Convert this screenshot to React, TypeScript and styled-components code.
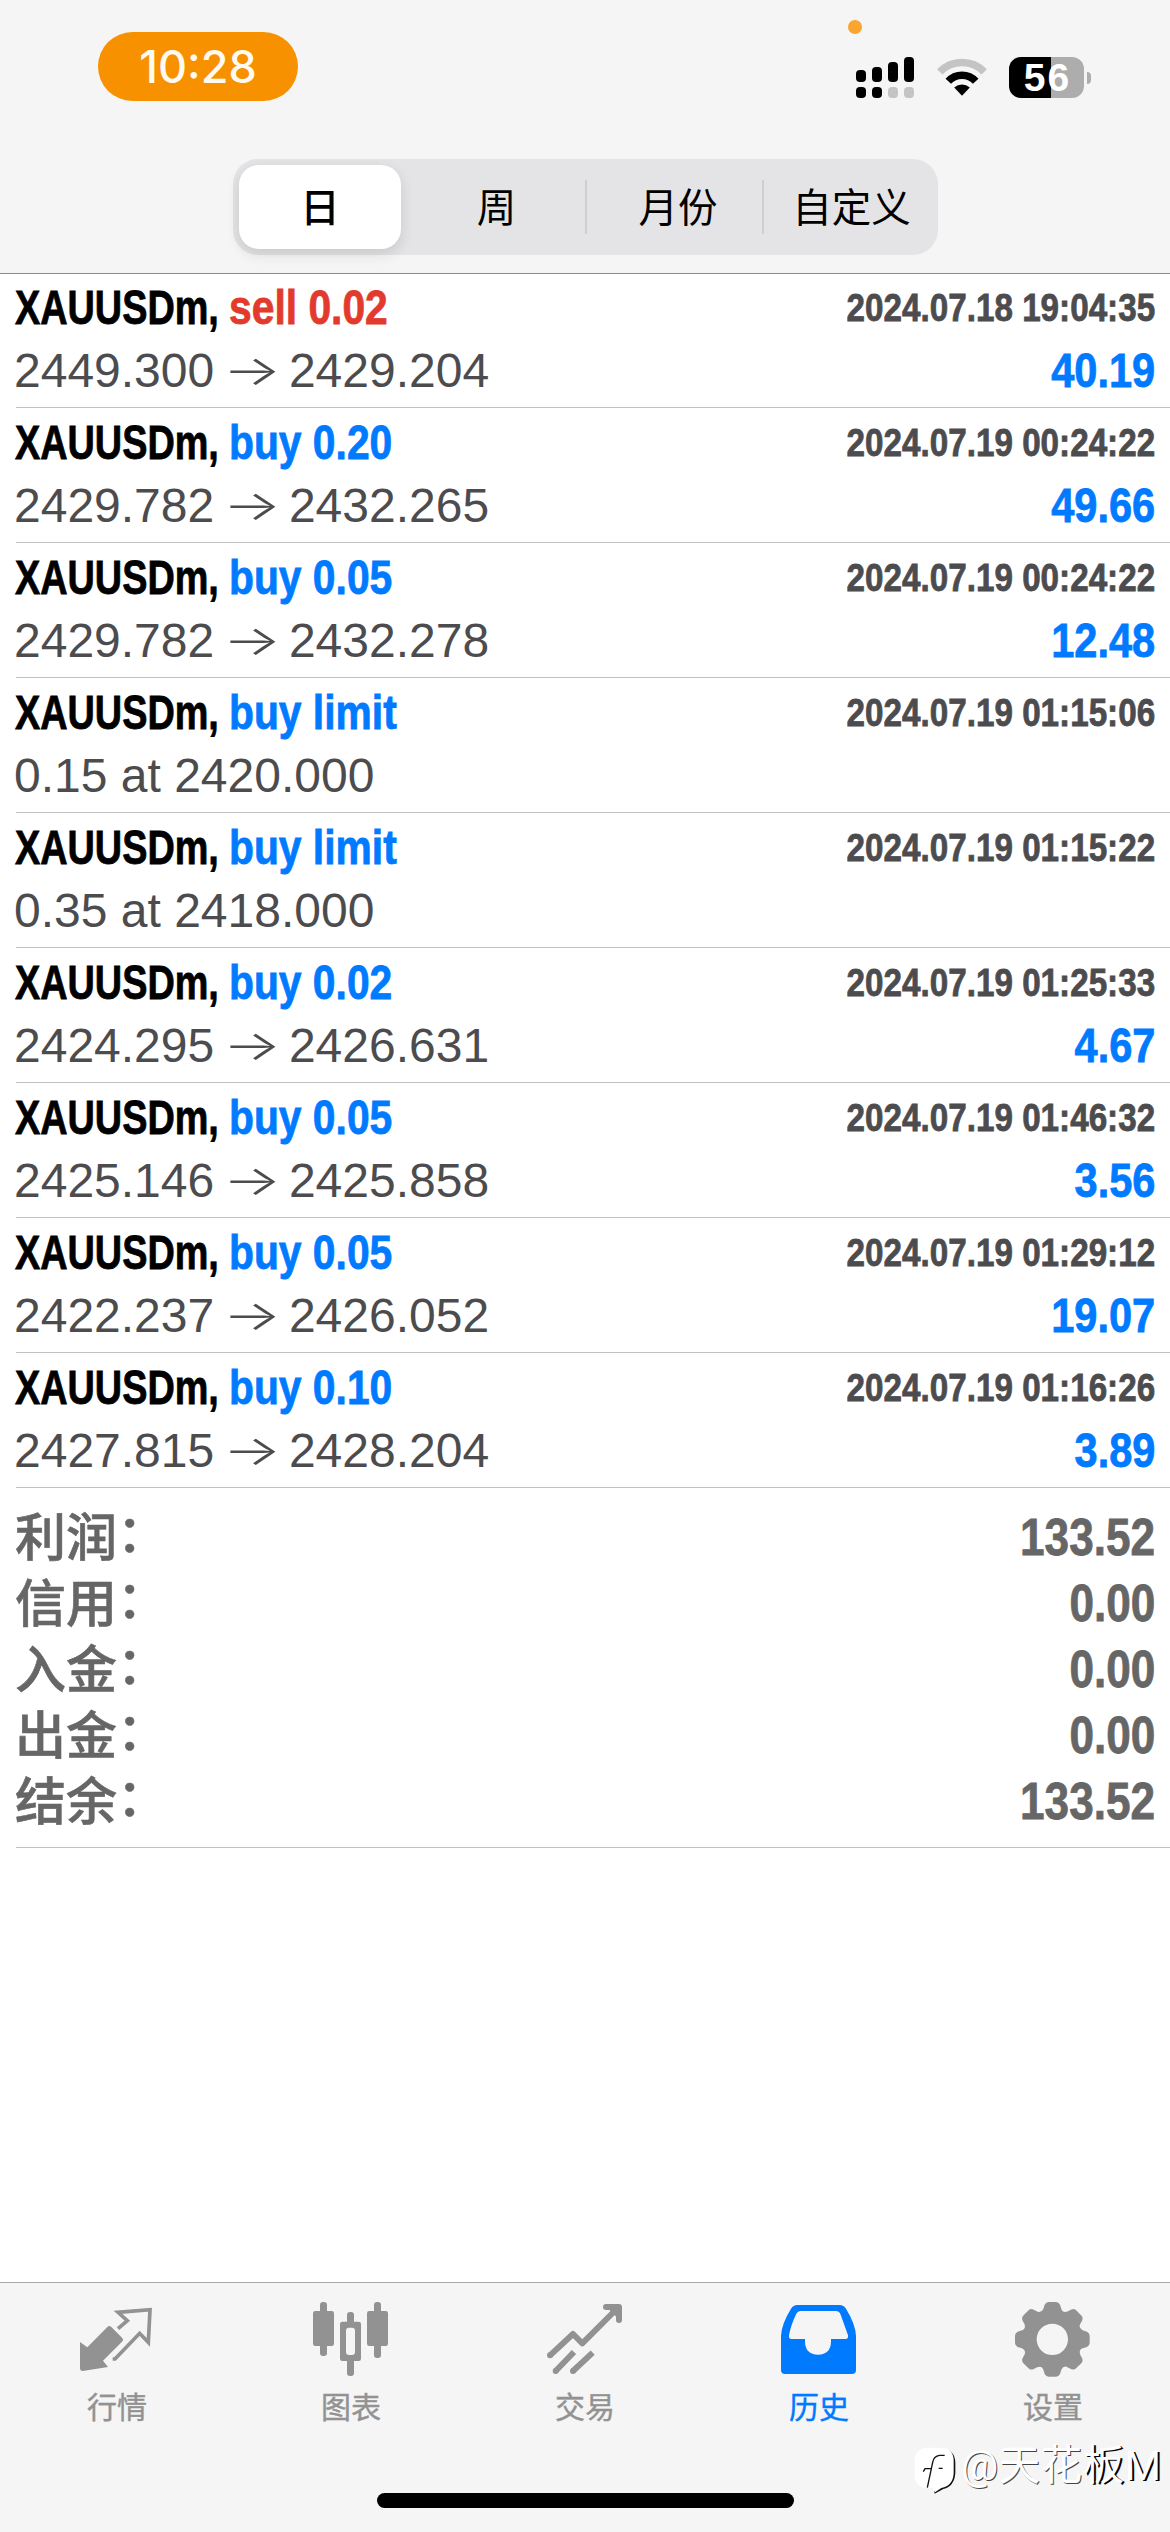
import React from 'react';
import styled, { createGlobalStyle } from 'styled-components';

const sans = `"Liberation Sans", "Noto Sans CJK SC", sans-serif`;

const colors = {
  bar: '#f5f5f5',
  blue: '#007aff',
  red: '#e23b2e',
  gray: '#929292',
  detail: '#4c4c4f',
  total: '#666666',
};

const GlobalStyle = createGlobalStyle`
  * { box-sizing: border-box; }
  body { margin: 0; background: #fff; }
`;

const Screen = styled.div`
  width: 1170px;
  height: 2532px;
  display: flex;
  flex-direction: column;
  background: #fff;
  overflow: hidden;
  white-space: nowrap;
`;

const Header = styled.header`
  flex: none;
  height: 274px;
  background: ${colors.bar};
  border-bottom: 1px solid #8c8c8c;
`;

const StatusBar = styled.div`
  position: relative;
  height: 159px;
  padding: 32px 79px 0 98px;
  display: flex;
  justify-content: space-between;
  align-items: flex-start;
`;

const TimePill = styled.div`
  width: 200px;
  height: 69px;
  border-radius: 35px;
  background: #f79100;
  color: #fffaf0;
  font: 500 45px/70px Inter, sans-serif;
  text-align: center;
`;

const MicDot = styled.i`
  position: absolute;
  left: 848px;
  top: 20px;
  width: 14px;
  height: 14px;
  border-radius: 50%;
  background: #f9a52f;
`;

const StatusIcons = styled.div`
  display: flex;
  align-items: flex-start;
  padding-top: 25px;
  svg { display: block; }
`;

const Wifi = styled.svg`
  margin: 1px 22px 0 23px;
`;

const Battery = styled.div`
  width: 75px;
  height: 41px;
  border-radius: 12px;
  background: linear-gradient(90deg, #000 42px, #adadad 42px);
  color: #fff;
  font: 700 39px/42px ${sans};
  letter-spacing: 2px;
  text-indent: 2px;
  text-align: center;
`;

const BatteryCap = styled.i`
  width: 4px;
  height: 12px;
  margin: 15px 0 0 3px;
  border-radius: 0 4px 4px 0;
  background: #adadad;
`;

const Segments = styled.nav`
  width: 705px;
  height: 96px;
  margin-left: 233px;
  padding: 6px;
  border-radius: 25px;
  background: #e4e4e6;
  display: grid;
  grid-template-columns: 162px 186px 177px 168px;
  align-items: center;
`;

const Segment = styled.button<{ $active?: boolean; $divided?: boolean }>`
  height: ${p => (p.$active ? 84 : 54)}px;
  padding: 1px 0 0 ${p => (p.$active ? 0 : 7)}px;
  border: 0 solid #cfcfd2;
  border-right-width: ${p => (p.$divided ? 2 : 0)}px;
  border-radius: ${p => (p.$active ? 20 : 0)}px;
  background: ${p => (p.$active ? '#fff' : 'transparent')};
  box-shadow: ${p => (p.$active ? '0 5px 14px rgba(0,0,0,.12)' : 'none')};
  color: #000;
  font: ${p => (p.$active ? 500 : 400)} 39.5px/54px ${sans};
`;

const List = styled.main`
  flex: 1;
  margin-top: -1px;
  padding-left: 16px;
`;

const Deal = styled.article`
  height: 135px;
  padding: 7px 15px 0 0;
  border-bottom: 1px solid #c2c2c4;
`;

const Line = styled.div`
  display: flex;
  justify-content: space-between;
  height: 63px;
`;

/* Bold text squeezed horizontally to the proportions of a condensed face. */
const Condensed = styled.span<{ $k: number; $end?: boolean }>`
  display: block;
  transform: scaleX(${p => p.$k});
  transform-origin: ${p => (p.$end ? '100%' : '0')} 50%;
  -webkit-text-stroke: 0.8px currentColor;
  font: 700 48px/56px ${sans};
`;

const Title = styled.h2`
  margin: 0 0 0 -1px;
  display: flex;
`;

const Symbol = styled(Condensed)`
  width: 214px;
  color: #000;
`;

const Action = styled(Condensed)<{ $sell?: boolean }>`
  color: ${p => (p.$sell ? colors.red : colors.blue)};
`;

const Time = styled(Condensed)`
  color: ${colors.detail};
  font-size: 39px;
  line-height: 55px;
`;

const Price = styled.span`
  margin-left: -2px;
  color: ${colors.detail};
  font: 400 48px/56px ${sans};
`;

const Arrow = styled.span`
  display: inline-block;
  width: 48px;
  height: 56px;
  vertical-align: top;
  text-align: center;
  transform: scaleX(1.5);
  font: 300 41px/54px Inter, sans-serif;
`;

const Profit = styled(Condensed)`
  color: ${colors.blue};
`;

const Totals = styled.section`
  height: 360px;
  padding: 16px 15px 0 0;
  border-bottom: 1px solid #c2c2c4;
`;

const TotalRow = styled.div`
  height: 66px;
  display: flex;
  justify-content: space-between;
  color: ${colors.total};
`;

const TotalLabel = styled.span`
  margin-left: -1px;
  padding-top: 5px;
  display: flex;
  -webkit-text-stroke: 0.6px currentColor;
  font: 500 51px/60px ${sans};
`;

const Colon = styled.span`
  margin-top: -4px;
`;

const TotalValue = styled(Condensed)`
  font-size: 51px;
  line-height: 67px;
`;

const Footer = styled.footer`
  position: relative;
  flex: none;
  height: 250px;
  border-top: 1px solid #a8a8a8;
  background: ${colors.bar};
`;

const Tabs = styled.nav`
  display: grid;
  grid-template-columns: repeat(5, 1fr);
  padding-top: 17px;
`;

const Tab = styled.a<{ $active?: boolean }>`
  display: flex;
  flex-direction: column;
  align-items: center;
  color: ${p => (p.$active ? colors.blue : colors.gray)};
  -webkit-text-stroke: 0.4px currentColor;
  font: 400 30px/40px ${sans};
  svg { display: block; margin-bottom: 10px; }
`;

const HomeIndicator = styled.i`
  position: absolute;
  left: 377px;
  top: 210px;
  width: 417px;
  height: 15px;
  border-radius: 8px;
  background: #000;
`;

const Watermark = styled.div`
  position: absolute;
  left: 914px;
  top: 154px;
  display: flex;
  color: #fff;
  font: 400 41.5px/58px Roboto, "Noto Sans CJK SC", sans-serif;
  letter-spacing: 0.5px;
  text-shadow: 1px 1px 0 #444;
  svg { display: block; margin: 10px 4px 0 0; }
`;

const WatermarkTail = styled.span`
  text-shadow: 2px 1px 0 #000;
`;

const SignalIcon = () => (
  <svg width="58" height="41" viewBox="0 0 58 41">
    {[13, 10, 5, 0].map((top, i) => (
      <g key={top}>
        <rect x={i * 16} y={top} width="10" height={25 - top} rx="4" />
        <rect x={i * 16} y="30" width="10" height="11" rx="4" fill={i < 2 ? '#000' : '#c4c4c4'} />
      </g>
    ))}
  </svg>
);

const WifiIcon = () => (
  <Wifi width="50" height="38" viewBox="0 0 50 38">
    <g fill="none" strokeWidth="7.5">
      <path d="M2.8 13.8 A31 31 0 0 1 47.2 13.8" stroke="#c4c4c4" />
      <path d="M11.3 23.2 A18.5 18.5 0 0 1 38.7 23.2" stroke="#000" />
    </g>
    <path d="M17.2 29.6 A11.5 11.5 0 0 1 32.8 29.6 L25 37.8Z" />
  </Wifi>
);

const QuotesIcon = () => (
  <svg width="78" height="78" viewBox="234 120 234 234">
    <path d="M240 246 L262 262 L322 201 Q328 195 334 201 L366 233 Q372 239 366 245 L309 302 L324 321 L248 333 Q240 333 240 324Z" fill="currentColor" />
    <path d="M354 206 L382 182 L354 157 L450 149 L445 247 L419 220 L345 297 L338 297" fill="none" stroke="currentColor" strokeWidth="11" />
  </svg>
);

const ChartIcon = () => (
  <svg width="78" height="78" viewBox="936 120 234 234" fill="currentColor">
    <rect x="960" y="126" width="21" height="162" rx="9" />
    <rect x="939" y="153" width="63" height="105" rx="7" />
    <rect x="1122" y="126" width="21" height="168" rx="9" />
    <rect x="1101" y="153" width="63" height="105" rx="7" />
    <rect x="1041" y="156" width="21" height="40" rx="9" />
    <rect x="1041" y="292" width="21" height="56" rx="9" />
    <path fillRule="evenodd" d="M1027 185h49q7 0 7 7v104q0 7-7 7h-49q-7 0-7-7v-104q0-7 7-7ZM1047 203q-9 0-9 9v64q0 9 9 9h9q9 0 9-9v-64q0-9-9-9Z" />
  </svg>
);

const TradeIcon = () => (
  <svg width="78" height="78" viewBox="438 120 234 234" fill="none" stroke="currentColor" strokeWidth="18">
    <path d="M450 286 L519 222 L547 250 L650 147" strokeLinejoin="round" />
    <path d="M618 141 H657 V180" strokeLinecap="round" strokeLinejoin="round" />
    <path d="M626 148 L650 172 L657 150 L650 141Z" fill="currentColor" stroke="none" />
    <circle cx="450" cy="286" r="9" fill="currentColor" stroke="none" />
    <circle cx="467" cy="333" r="9" fill="currentColor" stroke="none" />
    <circle cx="519" cy="333" r="9" fill="currentColor" stroke="none" />
    <path d="M467 333 L522 276 M519 333 L578 278" />
  </svg>
);

const HistoryIcon = () => (
  <svg width="78" height="78" viewBox="30 120 234 234" fill="currentColor">
    <path
      fillRule="evenodd"
      d="M82 135H209Q221 135 228 146Q257 193 258 228V330Q258 342 246 342H45Q33 342 33 330V228Q34 193 63 146Q70 135 82 135ZM91 153Q83 153 79 161Q62 196 57 226Q55 237 65 237H105V245Q106 283 144 284Q182 283 183 245V237H226Q236 237 234 226L212 164Q208 153 198 153Z"
    />
  </svg>
);

const gearPath = (() => {
  const pt = (tooth: number, across: number, out: number) => {
    const a = (tooth * Math.PI) / 4;
    const x = 847 + out * Math.sin(a) + across * Math.cos(a);
    const y = 238 - out * Math.cos(a) + across * Math.sin(a);
    return `${x.toFixed(1)} ${y.toFixed(1)}`;
  };
  let d = '';
  for (let i = 0; i < 8; i++) {
    d += `${i ? 'L' : 'M'}${pt(i, -23, 104)} Q${pt(i, -19, 112)} ${pt(i, -11, 112)} L${pt(i, 11, 112)} Q${pt(i, 19, 112)} ${pt(i, 23, 104)} L${pt(i, 27, 91)} Q${pt(i, 31, 79)} ${pt(i + 1, -27, 91)} `;
  }
  return `${d}Z M894 238 A47 47 0 1 0 800 238 A47 47 0 1 0 894 238Z`;
})();

const SettingsIcon = () => (
  <svg width="78" height="78" viewBox="732 120 234 234">
    <path d={gearPath} fill="currentColor" fillRule="evenodd" />
  </svg>
);

const BadgeIcon = () => (
  <svg width="43" height="47" viewBox="430 558 129 141">
    <path d="M475 565H520Q553 568 554 606V635Q552 675 518 684L492 698Z" fill="#111" />
    <path d="M471 560H513Q548 562 549 598V637Q547 675 512 681L493 694L486 681H466Q433 678 432 642V600Q434 562 471 560Z" fill="#fff" />
    <path d="M522 583H507Q489 585 486 604L470 680M458 632L463 623H482M504 622H516" fill="none" stroke="#111" strokeWidth="4" />
  </svg>
);

type DealData = { action: string; time: string; from?: string; to?: string; note?: string; profit?: string };

const deals: DealData[] = [
  { action: 'sell 0.02', time: '2024.07.18 19:04:35', from: '2449.300', to: '2429.204', profit: '40.19' },
  { action: 'buy 0.20', time: '2024.07.19 00:24:22', from: '2429.782', to: '2432.265', profit: '49.66' },
  { action: 'buy 0.05', time: '2024.07.19 00:24:22', from: '2429.782', to: '2432.278', profit: '12.48' },
  { action: 'buy limit', time: '2024.07.19 01:15:06', note: '0.15 at 2420.000' },
  { action: 'buy limit', time: '2024.07.19 01:15:22', note: '0.35 at 2418.000' },
  { action: 'buy 0.02', time: '2024.07.19 01:25:33', from: '2424.295', to: '2426.631', profit: '4.67' },
  { action: 'buy 0.05', time: '2024.07.19 01:46:32', from: '2425.146', to: '2425.858', profit: '3.56' },
  { action: 'buy 0.05', time: '2024.07.19 01:29:12', from: '2422.237', to: '2426.052', profit: '19.07' },
  { action: 'buy 0.10', time: '2024.07.19 01:16:26', from: '2427.815', to: '2428.204', profit: '3.89' },
];

const totals = [
  ['利润', '133.52'],
  ['信用', '0.00'],
  ['入金', '0.00'],
  ['出金', '0.00'],
  ['结余', '133.52'],
];

const tabs = [
  { label: '行情', Icon: QuotesIcon },
  { label: '图表', Icon: ChartIcon },
  { label: '交易', Icon: TradeIcon },
  { label: '历史', Icon: HistoryIcon, active: true },
  { label: '设置', Icon: SettingsIcon },
];

export default function App() {
  return (
    <Screen>
      <GlobalStyle />
      <Header>
        <StatusBar>
          <TimePill>10:28</TimePill>
          <MicDot />
          <StatusIcons>
            <SignalIcon />
            <WifiIcon />
            <Battery>56</Battery>
            <BatteryCap />
          </StatusIcons>
        </StatusBar>
        <Segments>
          <Segment $active>日</Segment>
          <Segment $divided>周</Segment>
          <Segment $divided>月份</Segment>
          <Segment>自定义</Segment>
        </Segments>
      </Header>
      <List>
        {deals.map(d => (
          <Deal key={d.action + d.time}>
            <Line>
              <Title>
                <Symbol $k={0.788}>XAUUSDm,</Symbol>
                <Action $k={0.85} $sell={d.action.startsWith('sell')}>{d.action}</Action>
              </Title>
              <Time $k={0.852} $end>{d.time}</Time>
            </Line>
            <Line>
              <Price>{d.note ?? <>{d.from} <Arrow>→</Arrow> {d.to}</>}</Price>
              {d.profit && <Profit $k={0.865} $end>{d.profit}</Profit>}
            </Line>
          </Deal>
        ))}
        <Totals>
          {totals.map(([label, value]) => (
            <TotalRow key={label}>
              <TotalLabel>{label}<Colon>：</Colon></TotalLabel>
              <TotalValue $k={0.865} $end>{value}</TotalValue>
            </TotalRow>
          ))}
        </Totals>
      </List>
      <Footer>
        <Tabs>
          {tabs.map(({ label, Icon, active }) => (
            <Tab key={label} $active={active}>
              <Icon />
              {label}
            </Tab>
          ))}
        </Tabs>
        <HomeIndicator />
        <Watermark>
          <BadgeIcon />
          @天花<WatermarkTail>板M</WatermarkTail>
        </Watermark>
      </Footer>
    </Screen>
  );
}
